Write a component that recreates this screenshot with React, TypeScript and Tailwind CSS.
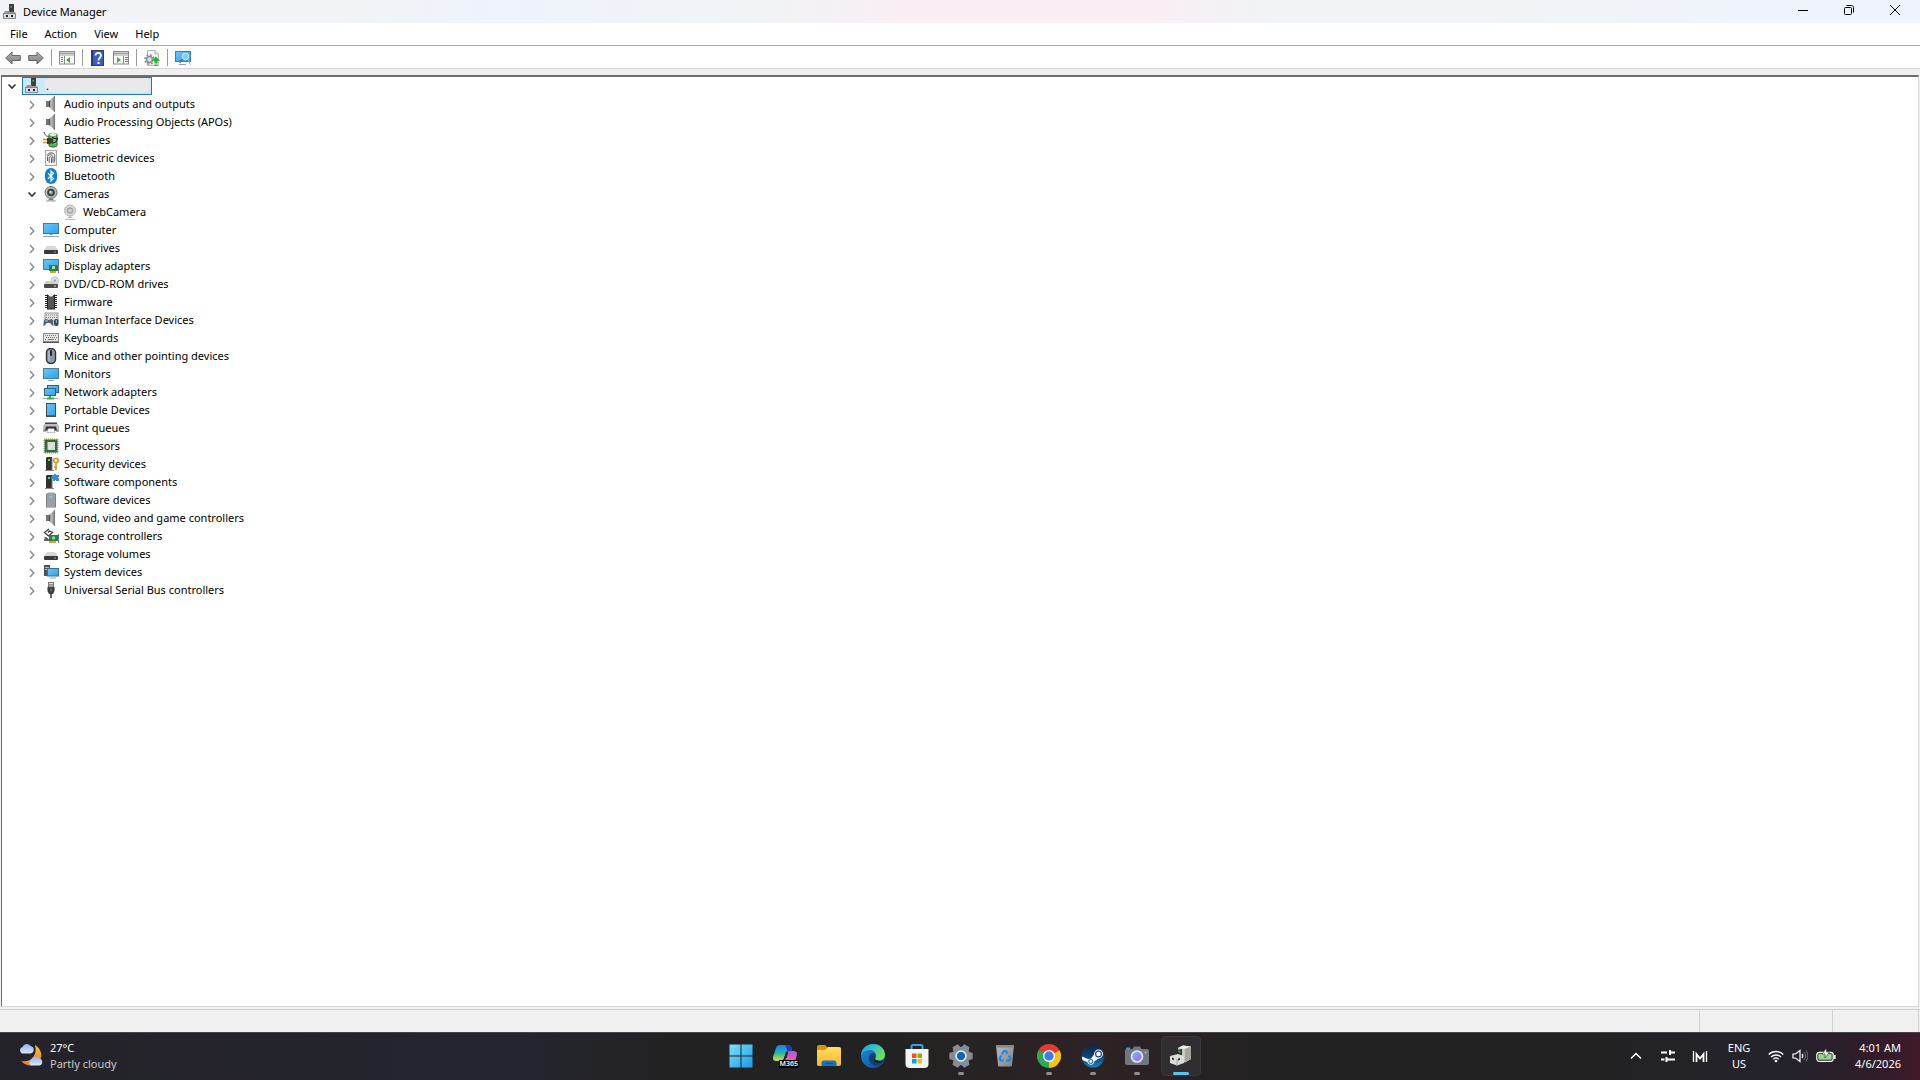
import { useState } from "react";
import type { ReactNode } from "react";

function Svg({ children, size = 16, className = "" }: { children: ReactNode; size?: number; className?: string }) {
  return (
    <svg viewBox={`0 0 ${size} ${size}`} width={size} height={size} className={`block shrink-0 ${className}`} aria-hidden="true">
      {children}
    </svg>
  );
}

function Gradients() {
  return (
    <svg width="0" height="0" className="absolute" aria-hidden="true">
      <defs>
        <linearGradient id="screen" x1="0" y1="0" x2="1" y2="1">
          <stop offset="0" stopColor="#6cc5f8" />
          <stop offset="1" stopColor="#2aa3f2" />
        </linearGradient>
        <linearGradient id="metal" x1="0" y1="0" x2="1" y2="0">
          <stop offset="0" stopColor="#7c7c7c" />
          <stop offset="0.5" stopColor="#b9b9b9" />
          <stop offset="1" stopColor="#8a8a8a" />
        </linearGradient>
        <linearGradient id="arrow" x1="0" y1="0" x2="0" y2="1">
          <stop offset="0" stopColor="#b5b5b5" />
          <stop offset="1" stopColor="#7d7d7d" />
        </linearGradient>
        <linearGradient id="win" gradientUnits="userSpaceOnUse" x1="0" y1="0" x2="24" y2="24">
          <stop offset="0" stopColor="#7fe3fb" />
          <stop offset="1" stopColor="#1797e8" />
        </linearGradient>
        <linearGradient id="copilotA" x1="0" y1="0" x2="0" y2="1">
          <stop offset="0" stopColor="#1c7ff0" />
          <stop offset="0.5" stopColor="#27b5a8" />
          <stop offset="1" stopColor="#d8dc38" />
        </linearGradient>
        <linearGradient id="copilotB" x1="0" y1="0" x2="0" y2="1">
          <stop offset="0" stopColor="#a45bf0" />
          <stop offset="0.5" stopColor="#e45bb0" />
          <stop offset="1" stopColor="#f98a5c" />
        </linearGradient>
        <linearGradient id="folder" x1="0" y1="0" x2="0" y2="1">
          <stop offset="0" stopColor="#ffdc62" />
          <stop offset="1" stopColor="#f6b72c" />
        </linearGradient>
        <linearGradient id="edgeTop" x1="0" y1="0" x2="1" y2="0.6">
          <stop offset="0" stopColor="#1f9de4" />
          <stop offset="0.5" stopColor="#35c1c9" />
          <stop offset="1" stopColor="#6fe04f" />
        </linearGradient>
        <linearGradient id="edgeLow" x1="0" y1="0" x2="1" y2="1">
          <stop offset="0" stopColor="#1b8fdc" />
          <stop offset="1" stopColor="#0c4a94" />
        </linearGradient>
        <linearGradient id="steam" x1="0" y1="0" x2="0" y2="1">
          <stop offset="0" stopColor="#14233f" />
          <stop offset="0.5" stopColor="#123f74" />
          <stop offset="1" stopColor="#1787bd" />
        </linearGradient>
        <linearGradient id="lens" x1="0" y1="0" x2="1" y2="1">
          <stop offset="0" stopColor="#5fc3f4" />
          <stop offset="1" stopColor="#b65fe0" />
        </linearGradient>
        <linearGradient id="moon" x1="0" y1="0" x2="0" y2="1">
          <stop offset="0" stopColor="#f8c23c" />
          <stop offset="1" stopColor="#ef7f2c" />
        </linearGradient>
        <linearGradient id="cloud" x1="0" y1="0" x2="0" y2="1">
          <stop offset="0" stopColor="#8fb2ee" />
          <stop offset="1" stopColor="#dbe6fb" />
        </linearGradient>
        <linearGradient id="bin" x1="0" y1="0" x2="1" y2="1">
          <stop offset="0" stopColor="#b9bcc0" />
          <stop offset="1" stopColor="#7f8489" />
        </linearGradient>
      </defs>
    </svg>
  );
}

const DeviceRoot = () => (
  <Svg>
    <rect x="7" y="0" width="5" height="8" fill="#3c3f3c" />
    <rect x="8.500" y="2" width="1.500" height="1.500" fill="#4fbf4f" />
    <path d="M3 7h4l1 1h5l1 2H1z" fill="#9a9a9a" />
    <rect x="1.500" y="9.500" width="12" height="5" fill="#dcdcdc" stroke="#8a8a8a" />
    <rect x="4" y="11" width="2" height="2" fill="#222" />
    <rect x="9" y="11" width="2" height="2" fill="#222" />
  </Svg>
);
const Speaker = () => (
  <Svg>
    <path d="M3 5h3v6H3z" fill="#747474" />
    <path d="M6 5 11 0.500v15L6 11z" fill="url(#metal)" />
    <path d="M6.500 5v6" stroke="#4f4f4f" />
    <path d="M11.500 0v16" stroke="#7c7c7c" />
  </Svg>
);
const Battery = () => (
  <Svg>
    <path d="M6 2.500C6 1 14 1 14 2.500v11c0 2-8 2-8 0z" fill="#52b556" stroke="#256b2c" />
    <ellipse cx="10" cy="2.500" rx="3.500" ry="1.500" fill="#e2f3df" />
    <path d="M12 5v7" stroke="#a5e694" fill="none" />
    <path d="M1 0c1 4 3 4 5 5" stroke="#444" fill="none" />
    <path d="M9 6c3 0 4 1.500 6 0M9 11c3 0 5-1 5.500-5" stroke="#2b2b2b" strokeWidth="1.300" fill="none" />
    <path d="M4 6h3l3 1v3l-3 2H4z" fill="#3c3c34" />
    <path d="M0 7.500h4M0 10.500h4" stroke="#b79c32" strokeWidth="1.500" />
  </Svg>
);
const Fingerprint = () => (
  <Svg>
    <rect x="2.500" y="0.500" width="11" height="15" fill="#f3f3f3" stroke="#a3a8a5" />
    <g fill="none" stroke="#4a4a4a" strokeWidth="0.900">
      <path d="M4.300 5.500C5 2 11 2 11.700 5.500V10c0 1-.3 2-.7 2.500" />
      <path d="M4.500 11V8c0-4.500 5.500-4.500 5.500 0v4.500" />
      <path d="M6.200 12.500V8.500c0-2.300 2.300-2.300 2.300 0V13" />
    </g>
  </Svg>
);
const Bluetooth = () => (
  <Svg>
    <rect x="2" y="0" width="12" height="16" rx="6" fill="#0a7fe6" />
    <path d="M5 5.200 10.500 10.500 8 13V3l2.500 2.500L5 10.800" fill="none" stroke="#fff" strokeWidth="1.200" />
  </Svg>
);
const Camera = () => (
  <Svg>
    <path d="M4 14.500c2-2 6-2 8 0z" fill="#777" />
    <path d="M3 15h10" stroke="#aaa" />
    <circle cx="8" cy="6.500" r="6" fill="#bdbdbd" stroke="#6f6f6f" />
    <circle cx="8" cy="6.500" r="3.800" fill="#3a3d40" />
    <circle cx="8" cy="6.500" r="2" fill="#8aa0ad" />
    <circle cx="7.300" cy="5.800" r="0.900" fill="#e8f2f6" />
  </Svg>
);
const CameraPale = () => (
  <Svg>
    <path d="M5 14c2-2 4-2 6 0z" fill="#aaa" />
    <path d="M3 15.500h10" stroke="#bbb" />
    <circle cx="8" cy="6.500" r="5.500" fill="#dcdcdc" stroke="#b0b0b0" />
    <circle cx="8" cy="6.500" r="3.300" fill="#a3a5a7" />
    <circle cx="8" cy="6.500" r="1.800" fill="#cfd6da" />
  </Svg>
);
const Computer = () => (
  <Svg>
    <rect x="0.500" y="1.500" width="15" height="10" fill="url(#screen)" stroke="#4b7b96" />
    <path d="M6 12h4v1H6z" fill="#9ab" />
    <path d="M0 14.500h16" stroke="#8fa6b3" />
  </Svg>
);
const Disk = () => (
  <Svg>
    <path d="M4 6h8l3 4H1z" fill="#d8d8d8" />
    <rect x="1" y="10" width="14" height="4" rx="1" fill="#3a3a3a" />
    <rect x="11" y="11.500" width="2" height="1" fill="#59d159" />
  </Svg>
);
const Display = () => (
  <Svg>
    <rect x="0.500" y="1.500" width="15" height="10" fill="url(#screen)" stroke="#4b7b96" />
    <rect x="6" y="7" width="9" height="6" fill="#2e7d46" />
    <rect x="9" y="8" width="3" height="3" fill="#a8d8b0" />
    <path d="M15.500 5v10" stroke="#777" />
    <path d="M7 14h6" stroke="#d9a520" strokeWidth="2" />
  </Svg>
);
const Dvd = () => (
  <Svg>
    <circle cx="12" cy="4.500" r="4" fill="#d9dde0" stroke="#bbb" strokeWidth="0.500" />
    <circle cx="12" cy="4.500" r="1" fill="#8e979d" />
    <path d="M3 5h8l3 3H1z" fill="#cfcfcf" />
    <rect x="1" y="8" width="14" height="4" rx="1" fill="#4a4a4a" />
    <rect x="11" y="9.500" width="2" height="1" fill="#ddd" />
  </Svg>
);
const Firmware = () => (
  <Svg>
    <path d="M4 1h2c0 2 4 2 4 0h2v14H4z" fill="#565656" />
    <path d="M3 1v14M13 1v14" stroke="#222" strokeWidth="2" strokeDasharray="1 1" />
    <path d="M4.500 0.500v14M11.500 0.500v14M4 15h8" stroke="#222" />
  </Svg>
);
const Hid = () => (
  <Svg>
    <rect x="2" y="1" width="13" height="8" fill="#e3e3e3" stroke="#999" />
    <path d="M3 3h11M3 5.500h11" stroke="#777" strokeDasharray="1 1" />
    <path d="M0.500 14C0.500 9 1 7 3 7s1.500 1 2.500 1S7 7 8.500 7s2 3 2 7c-2 0-2.500-3-3.500-3H4c-1 0-1.500 3-3.500 3z" fill="#56616b" />
    <rect x="2.500" y="8" width="2" height="2" fill="#66b7e8" />
    <rect x="11" y="7" width="4.500" height="7" rx="2" fill="#3c434a" />
    <path d="M13.300 8v3" stroke="#9fc8e4" />
  </Svg>
);
const Keyboard = () => (
  <Svg>
    <rect x="0.500" y="3.500" width="15" height="8" fill="#e4e4e4" stroke="#8b8b8b" />
    <path d="M2 5.500h12M3 7.500h11M2 9.500h2M12 9.500h2" stroke="#777" strokeDasharray="1 1" />
    <path d="M5 9.500h6" stroke="#777" />
    <path d="M0 12.500h16" stroke="#555" />
  </Svg>
);
const Mouse = () => (
  <Svg>
    <rect x="3.500" y="0.500" width="9" height="15" rx="4" fill="#8e99a8" stroke="#2f343c" strokeWidth="1.400" />
    <path d="M6 3v10" stroke="#c5ccd6" />
    <rect x="7" y="2" width="2" height="6" rx="1" fill="#23272e" />
  </Svg>
);
const Monitor = () => (
  <Svg>
    <rect x="0.500" y="2.500" width="15" height="10" fill="url(#screen)" stroke="#4b7b96" />
    <path d="M5 14.500h6" stroke="#8fa6b3" />
  </Svg>
);
const Network = () => (
  <Svg>
    <rect x="4.500" y="1.500" width="11" height="7" fill="url(#screen)" stroke="#31627e" />
    <rect x="1.500" y="4.500" width="11" height="7" fill="url(#screen)" stroke="#31627e" />
    <path d="M0 14.500h15" stroke="#a3b3a3" />
    <path d="M7 12v2M4 14.500h7" stroke="#35b03a" strokeWidth="2" />
  </Svg>
);
const Portable = () => (
  <Svg>
    <rect x="3.500" y="1.500" width="9" height="13" fill="url(#screen)" stroke="#444c55" />
    <path d="M4 13.500h8" stroke="#586069" />
  </Svg>
);
const Printer = () => (
  <Svg>
    <path d="M2 2.500h12v2H2z" fill="#444" />
    <path d="M1 4h14l1 2v5H0V6z" fill="#b9bec1" />
    <path d="M3 6.500h10l1 4H2z" fill="#303336" />
    <path d="M5 8.500h6l1 4H4z" fill="#f4f4f4" stroke="#888" strokeWidth="0.500" />
    <path d="M0 11h3M13 11h3" stroke="#666" />
  </Svg>
);
const Processor = () => (
  <Svg>
    <rect x="1" y="1" width="14" height="14" fill="none" stroke="#c6b46a" strokeWidth="1.500" strokeDasharray="1 1" />
    <rect x="1.500" y="1.500" width="13" height="13" fill="#2f6a45" />
    <rect x="4.500" y="4" width="7.500" height="8" fill="#d8dcd8" />
    <path d="M6 10l4-4" stroke="#f6f6f6" />
  </Svg>
);
const Tower = () => (
  <>
    <path d="M3 2l1-1h5v13H3z" fill="#303330" />
    <path d="M9 2v12" stroke="#777" />
    <rect x="5" y="3" width="2" height="2" fill="#45dd4f" />
    <path d="M2 14.500h9" stroke="#888" />
  </>
);
const Security = () => (
  <Svg>
    <Tower />
    <circle cx="13" cy="4.500" r="2.200" fill="none" stroke="#d69a2a" strokeWidth="1.700" />
    <path d="M13 7v7M13 11h-2" stroke="#d69a2a" strokeWidth="1.700" />
  </Svg>
);
const Component = () => (
  <Svg>
    <Tower />
    <path d="M9 1h2V0h2v1h3v2h-1v1h1v3h-3V6h-1v1h-2V5H8V3h1z" fill="#3b8ed0" />
  </Svg>
);
const SoftDevice = () => (
  <Svg>
    <path d="M3 2l2-1.500h6L13 2v13H3z" fill="#9ba1a6" />
    <path d="M3.500 2v13M12.500 2v13" stroke="#7b8287" />
    <rect x="7" y="4" width="2" height="2" fill="#5be0d8" />
    <path d="M3 15.500h10" stroke="#bbb" />
  </Svg>
);
const StorageCtl = () => (
  <Svg>
    <path d="M6 1 1.500 4.500 5.500 8l4-3.500L6.500 3 5 4.500" fill="none" stroke="#3b3b3b" strokeWidth="1.300" />
    <path d="M1.500 9.500 5 11" stroke="#555" strokeWidth="1.500" />
    <rect x="6" y="7" width="9" height="6" fill="#2e7d46" />
    <rect x="9" y="8.500" width="3" height="3" fill="#8ad098" />
    <path d="M1 12h5" stroke="#333" strokeWidth="1.500" />
    <path d="M15.500 6v9" stroke="#777" />
    <path d="M6 14h7" stroke="#e0a81f" strokeWidth="2" />
  </Svg>
);
const System = () => (
  <Svg>
    <path d="M1 1h6v11H1z" fill="#4b545b" />
    <path d="M2 3.500h4M2 5.500h4" stroke="#a9b5bd" />
    <rect x="4.500" y="4.500" width="11" height="7.500" fill="url(#screen)" stroke="#3d6f8d" />
    <path d="M7 14h6" stroke="#8fa6b3" />
  </Svg>
);
const Usb = () => (
  <Svg>
    <rect x="5.500" y="0.500" width="5" height="4.500" fill="#e0e0e0" stroke="#777" />
    <path d="M7 2v2M9 2v2" stroke="#555" />
    <path d="M4.500 5h7v4L10 12H6l-1.500-3z" fill="#3c3c3c" />
    <path d="M8 12v4" stroke="#666" strokeWidth="2" />
    <path d="M8 6.500v3" stroke="#999" />
  </Svg>
);

const devices: { label: string; icon: ReactNode; children?: { label: string; icon: ReactNode }[] }[] = [
  { label: "Audio inputs and outputs", icon: <Speaker /> },
  { label: "Audio Processing Objects (APOs)", icon: <Speaker /> },
  { label: "Batteries", icon: <Battery /> },
  { label: "Biometric devices", icon: <Fingerprint /> },
  { label: "Bluetooth", icon: <Bluetooth /> },
  { label: "Cameras", icon: <Camera />, children: [{ label: "WebCamera", icon: <CameraPale /> }] },
  { label: "Computer", icon: <Computer /> },
  { label: "Disk drives", icon: <Disk /> },
  { label: "Display adapters", icon: <Display /> },
  { label: "DVD/CD-ROM drives", icon: <Dvd /> },
  { label: "Firmware", icon: <Firmware /> },
  { label: "Human Interface Devices", icon: <Hid /> },
  { label: "Keyboards", icon: <Keyboard /> },
  { label: "Mice and other pointing devices", icon: <Mouse /> },
  { label: "Monitors", icon: <Monitor /> },
  { label: "Network adapters", icon: <Network /> },
  { label: "Portable Devices", icon: <Portable /> },
  { label: "Print queues", icon: <Printer /> },
  { label: "Processors", icon: <Processor /> },
  { label: "Security devices", icon: <Security /> },
  { label: "Software components", icon: <Component /> },
  { label: "Software devices", icon: <SoftDevice /> },
  { label: "Sound, video and game controllers", icon: <Speaker /> },
  { label: "Storage controllers", icon: <StorageCtl /> },
  { label: "Storage volumes", icon: <Disk /> },
  { label: "System devices", icon: <System /> },
  { label: "Universal Serial Bus controllers", icon: <Usb /> },
];

function Expander({ open, label, onClick }: { open: boolean; label: string; onClick: () => void }) {
  return (
    <button type="button" aria-label={label} aria-expanded={open} onClick={onClick} className="flex w-5 shrink-0 items-center justify-center">
      <svg viewBox="0 0 10 10" width="10" height="10" fill="none" aria-hidden="true">
        {open ? (
          <path d="M1.500 3.500 5 7l3.500-3.500" stroke="#333" strokeWidth="1.600" />
        ) : (
          <path d="M3 2l3.800 4L3 10" stroke="#8a8a8a" strokeWidth="1.400" />
        )}
      </svg>
    </button>
  );
}

function TreeItem({ label, icon, children }: (typeof devices)[number]) {
  const [open, setOpen] = useState(Boolean(children));
  return (
    <li>
      <div className="flex h-[18px] items-center pl-5">
        <Expander open={open && Boolean(children)} label={`Toggle ${label}`} onClick={() => setOpen(!open)} />
        <button type="button" className="ml-px flex items-center gap-1 whitespace-nowrap">
          {icon}
          <span className="pl-px">{label}</span>
        </button>
      </div>
      {open && children && (
        <ul>
          {children.map((c) => (
            <li key={c.label} className="flex h-[18px] items-center pl-[60px]">
              <button type="button" className="flex items-center gap-1 whitespace-nowrap">
                {c.icon}
                <span className="pl-px">{c.label}</span>
              </button>
            </li>
          ))}
        </ul>
      )}
    </li>
  );
}

const PaneWindow = ({ flip = false }: { flip?: boolean }) => (
  <Svg>
    <rect x="0.500" y="1.500" width="15" height="12.500" fill="#fafafa" stroke="#858b91" />
    <path d="M1 3.500h14" stroke="#9aa2a9" strokeWidth="2" />
    <path d="M1 5.500h14" stroke="#c9ced2" />
    <path d={flip ? "M10.500 6v8" : "M5.500 6v8"} stroke="#858b91" />
    <path d={flip ? "M12 7.500h3M12 9.500h3M12 11.500h3" : "M2 7.500h2M2 9.500h2M2 11.500h2"} stroke="#4a7fb0" />
    <path d={flip ? "M4 7v6l4-3z" : "M11 7v6L7 10z"} fill="#3fae3c" />
  </Svg>
);

function Tool({ label, children }: { label: string; children: ReactNode }) {
  return (
    <button type="button" aria-label={label} title={label} className="flex w-[23px] items-center justify-center">
      {children}
    </button>
  );
}
const Separator = () => (
  <div className="flex w-2 justify-center py-0.5">
    <div className="w-px bg-[#9b9b9b]" />
  </div>
);

function Toolbar() {
  return (
    <div role="toolbar" className="flex h-[22px] shrink-0 bg-white pt-px pl-px">
      <Tool label="Back">
        <Svg>
          <path d="M0.700 8 7 2v3.500h8.300v5H7V14z" fill="url(#arrow)" stroke="#666" />
        </Svg>
      </Tool>
      <Tool label="Forward">
        <Svg>
          <path d="M15.300 8 9 2v3.500H0.700v5H9V14z" fill="url(#arrow)" stroke="#666" />
        </Svg>
      </Tool>
      <Separator />
      <Tool label="Show console tree">
        <PaneWindow />
      </Tool>
      <Separator />
      <Tool label="Help">
        <Svg>
          <rect x="1.500" y="0.500" width="12" height="15" fill="#3a5fc4" stroke="#263c86" />
          <path d="M2.500 1v14" stroke="#22357a" />
          <path d="M5.500 5.500c0-3.500 5.500-3.500 5.500 0C11 7.500 8.500 8 8.500 10.500" fill="none" stroke="#fff" strokeWidth="1.800" />
          <rect x="7.500" y="12" width="2" height="2" fill="#fff" />
        </Svg>
      </Tool>
      <Tool label="Show action pane">
        <PaneWindow flip />
      </Tool>
      <Separator />
      <Tool label="Update drivers">
        <Svg>
          <path d="M3.500 0.500H11L14.500 4v11.500h-11z" fill="#f7f7f7" stroke="#b5b5b5" />
          <path d="M11 0.500V4h3.500" fill="none" stroke="#b5b5b5" />
          <circle cx="5.500" cy="9.500" r="4.600" fill="none" stroke="#8b8b8b" strokeWidth="1.600" strokeDasharray="1.800 1.812" />
          <circle cx="5.500" cy="9.500" r="3" fill="#e2e2e2" stroke="#8b8b8b" strokeWidth="1.600" />
          <path d="M12 6.500 16 11h-2.500v2h-3v-2H8z" fill="#25b32b" />
          <path d="M10.500 14h3M10.500 15.500h3" stroke="#25b32b" />
        </Svg>
      </Tool>
      <Separator />
      <Tool label="Scan for hardware changes">
        <Svg>
          <rect x="0.500" y="1.500" width="15" height="10" fill="url(#screen)" stroke="#3b7fae" />
          <path d="M4 14.500h7" stroke="#8fa6b3" />
          <path d="M8 9 4.500 12.500" stroke="#5b6f80" strokeWidth="1.800" />
          <circle cx="10.500" cy="6.500" r="3.300" fill="#84cdf8" stroke="#d5edfb" />
          <path d="M13 9.500l2.500 5" stroke="#9fb4c2" />
        </Svg>
      </Tool>
    </div>
  );
}

const StartIcon = () => (
  <Svg size={24}>
    <path d="M0.500 0.500h11v11h-11zM12.500 0.500h11v11h-11zM0.500 12.500h11v11h-11zM12.500 12.500h11v11h-11z" fill="url(#win)" />
  </Svg>
);
const CopilotIcon = () => (
  <span className="relative block">
    <Svg size={24}>
      <path d="M7 1h8c2 0 3 1 3.500 3l.7 3H15c-1.500 0-2 1-2.500 3l-1.600 4c-.6 2-1.500 3-3.500 3H3c-3 0-3.500-2-2.700-5L3 4c.7-2 2-3 4-3z" fill="url(#copilotA)" />
      <path d="M12 1h3c2 0 3 1 3.500 3l.7 3h-4.500z" fill="#2438b8" />
      <path d="M16 7h4.500c3 0 4 2 3.200 5l-2 6c-.7 2-2 3-4 3H9c2 0 2.500-2 3-4l2.500-8c.4-1.500.5-2 1.500-2z" fill="url(#copilotB)" />
      <path d="M13 8.500h2L13.500 14h-2z" fill="#222" />
    </Svg>
    <span className="absolute top-4 left-1.5 bg-black px-px font-['Noto_Sans'] text-[7px] leading-2 font-semibold text-white">M365</span>
  </span>
);
const FolderIcon = () => (
  <Svg size={24}>
    <path d="M0 3c0-1 .5-2 2-2h6l3 3h-1L8 7H0z" fill="#d9930f" />
    <path d="M0 6h8l3-3h11c1.500 0 2 .7 2 2v15c0 1-.7 2-2 2H2c-1.500 0-2-1-2-2z" fill="url(#folder)" />
    <path d="M4.500 22v-3c0-1.500 1-2.500 2.500-2.500h10c1.500 0 2.500 1 2.500 2.500v3z" fill="#1274c5" />
    <path d="M8 19.500h8" stroke="#0b5290" strokeWidth="1.200" />
  </Svg>
);
const EdgeIcon = () => (
  <Svg size={24}>
    <circle cx="12" cy="12" r="12" fill="url(#edgeLow)" />
    <path d="M0 12C0 5 5.500 0 12 0c7 0 12 5 12 10.500 0 4-3 6-6 6-2.500 0-4-1-4-2 0-.6 1-1 1-3C15 8.500 12.500 6 9 6c-5 0-9 3-9 6z" fill="url(#edgeTop)" />
    <path d="M8 14c0-3 2-5 4.500-5C14 9.500 15 10.500 15 11.700c0 1.600-1 2-1 2.800 0 1.500 2 2.500 4.500 2.500 1.500 0 3-.5 4-1.300C20 21 17 22 15 22c-4 0-7-4-7-8z" fill="#133f72" />
    <path d="M14 14.500c0 1.500 2 2.500 4.500 2.500 1.500 0 3-.5 4-1.300-1 2-2.500 3-4 3.300-4 .5-6.500-2-5.500-5z" fill="#222" />
  </Svg>
);
const StoreIcon = () => (
  <Svg size={24}>
    <path d="M6.500 6V2.500c0-1 .5-1.500 1.500-1.500h8c1 0 1.500.5 1.500 1.500V6" fill="none" stroke="#2fa4de" strokeWidth="2" />
    <path d="M0.500 5h23v15c0 2.500-1.500 4-4 4h-15c-2.500 0-4-1.500-4-4z" fill="#f4f4f4" />
    <rect x="7" y="9.500" width="4.500" height="4.500" fill="#f25022" />
    <rect x="12.500" y="9.500" width="4.500" height="4.500" fill="#7fba00" />
    <rect x="7" y="15" width="4.500" height="4.500" fill="#00a4ef" />
    <rect x="12.500" y="15" width="4.500" height="4.500" fill="#ffb900" />
  </Svg>
);
const GearIcon = () => (
  <Svg size={24}>
    <circle cx="12" cy="12" r="9" fill="#858d96" />
    <g fill="#858d96">
      {[30, 90, 150, 210, 270, 330].map((a) => (
        <path key={a} d="M7.500 5 9 0.300h6L16.500 5z" transform={`rotate(${a} 12 12)`} />
      ))}
    </g>
    <circle cx="12" cy="12" r="5.700" fill="#eef2f6" />
    <circle cx="12" cy="12" r="4.200" fill="#1464b4" />
  </Svg>
);
const BinIcon = () => (
  <Svg size={24}>
    <path d="M3 1h18l-2 20c-.1 1-.6 1.500-1.600 1.500H6.600c-1 0-1.500-.5-1.600-1.500z" fill="url(#bin)" />
    <path d="M3 1h18l-.3 2.500H3.300z" fill="#83888d" />
    <g fill="none" stroke="#1b8be0" strokeWidth="2.200">
      <path d="M9 10.500 11 7h2l1.700 3" />
      <path d="M16 11.500l1.300 3-1 2H13" />
      <path d="M10.500 16.500H7.700l-1-2 1.500-3" />
    </g>
  </Svg>
);
const ChromeIcon = () => (
  <Svg size={24}>
    <path d="M12 12 1.600 6A12 12 0 0 1 22.400 6z" fill="#e33b2e" />
    <path d="M12 12 22.400 6A12 12 0 0 1 12 24z" fill="#fbc116" />
    <path d="M12 12V24A12 12 0 0 1 1.600 6z" fill="#2da94f" />
    <path d="M12 6h10.400L12 12z" fill="#e33b2e" />
    <path d="M17.200 15 12 24v-9z" fill="#fbc116" />
    <path d="M1.600 6l5.200 9L12 12z" fill="#2da94f" />
    <circle cx="12" cy="12" r="6" fill="#fff" />
    <circle cx="12" cy="12" r="4.700" fill="#3b7ded" />
  </Svg>
);
const SteamIcon = () => (
  <Svg size={24}>
    <circle cx="12" cy="12" r="11.500" fill="url(#steam)" />
    <path d="M0.800 12.500 7.500 15.300c1-.6 1.500-.6 2.500-.6l3-4.200C13 7.500 15 5.500 17.500 5.500S22 7.500 22 10s-2 4.500-4.500 4.500l-4.200 3c-.2 2-1.600 3.300-3.500 3.300-1.700 0-3-1.100-3.400-2.700L1.500 16z" fill="#f2f6fa" />
    <circle cx="17.500" cy="10" r="2.900" fill="#f2f6fa" stroke="#174a7c" strokeWidth="1.200" />
    <circle cx="9.800" cy="17.500" r="2" fill="none" stroke="#174a7c" />
  </Svg>
);
const CameraAppIcon = () => (
  <Svg size={24}>
    <path d="M1 5c0-1 .5-1.500 1.500-1.500H5V7H1z" fill="#3da2dc" />
    <path d="M7.500 5 9 2.500h6L16.500 5H22c1.300 0 2 .7 2 2v12c0 1.300-.7 2-2 2H2c-1.300 0-2-.7-2-2V7c0-1.300.7-2 2-2z" fill="#70777e" />
    <circle cx="12" cy="12.500" r="6.300" fill="#e6eaf0" />
    <circle cx="12" cy="12.500" r="4.700" fill="url(#lens)" />
    <circle cx="20.500" cy="8.500" r="1" fill="#b5bac0" />
  </Svg>
);
const DeviceAppIcon = () => (
  <Svg size={24}>
    <path d="M9 4l5-2.500 8 1V15l-6 3.500L9 16z" fill="#c9c9c6" />
    <path d="M9 4l7 1 6-2.500-8-1z" fill="#ecece9" />
    <path d="M16 5v13.500l6-3.500V2.500z" fill="#a5a5a2" />
    <path d="M8 6l5-1v7l-5 1z" fill="#25352a" />
    <path d="M9 7.500l2-.5v2" stroke="#5d9a68" fill="none" />
    <path d="M1 12l8-2 6 2v7l-7 2.500L1 19z" fill="#dcdcd9" />
    <path d="M3 13.500l2 .7v2l-2-.7zM9 14.500l2-.6v2l-2 .6z" fill="#333" />
    <path d="M8 15v6.500" stroke="#a5a5a2" />
  </Svg>
);

const apps: { label: string; icon: ReactNode; state?: "running" | "active" }[] = [
  { label: "Start", icon: <StartIcon /> },
  { label: "Microsoft 365 Copilot", icon: <CopilotIcon /> },
  { label: "File Explorer", icon: <FolderIcon /> },
  { label: "Microsoft Edge", icon: <EdgeIcon /> },
  { label: "Microsoft Store", icon: <StoreIcon /> },
  { label: "Settings", icon: <GearIcon />, state: "running" },
  { label: "Recycle Bin", icon: <BinIcon /> },
  { label: "Google Chrome", icon: <ChromeIcon />, state: "running" },
  { label: "Steam", icon: <SteamIcon />, state: "running" },
  { label: "Camera", icon: <CameraAppIcon />, state: "running" },
  { label: "Device Manager", icon: <DeviceAppIcon />, state: "active" },
];

function Taskbar() {
  return (
    <footer className="grid h-12 shrink-0 grid-cols-[1fr_auto_1fr] border-t border-[#45444a] bg-[linear-gradient(90deg,#242329_0%,#252530_27%,#222222_35%,#232222_47%,#2e2225_57%,#222222_66%,#222222_82%,#24232c_93%,#2d1d28_97%,#401a2b_100%)] pb-0.5 text-white">
      <div className="flex items-center pl-[18px]">
        <button type="button" className="flex items-center gap-[7px] text-left">
          <Svg size={25}>
            <path d="M17 2c6 4 8 10 5 15-3 6-12 8-19 1 9 2 17-5 14-16z" fill="url(#moon)" />
            <path d="M4 10.500a3.500 3.500 0 0 1 .5-6.500 4.500 4.500 0 0 1 8-1 3.800 3.800 0 0 1 0 7.500z" fill="url(#cloud)" />
            <path d="M13 22.500a3.300 3.300 0 0 1 .5-6 4.500 4.500 0 0 1 8-1 3.600 3.600 0 0 1 0 7z" fill="url(#cloud)" />
          </Svg>
          <span className="flex flex-col leading-4">
            <span>27°C</span>
            <span className="text-[#c9c8cc]">Partly cloudy</span>
          </span>
        </button>
      </div>
      <nav className="flex items-center pl-px" aria-label="Taskbar">
        {apps.map((app) => (
          <div key={app.label} className="px-0.5">
            <button
              type="button"
              aria-label={app.label}
              className={
                app.state === "active"
                  ? "relative flex size-10 items-center justify-center rounded-[4px] border border-[#3a3839] bg-[#302e30]"
                  : "relative flex size-10 items-center justify-center"
              }
            >
              {app.icon}
              {app.state === "running" && <span className="absolute bottom-px h-[3px] w-1.5 rounded-full bg-[#908d90]" />}
              {app.state === "active" && <span className="absolute bottom-0 h-[3px] w-4 rounded-full bg-[#5cc2f0]" />}
            </button>
          </div>
        ))}
      </nav>
      <div className="flex items-center justify-end pr-[19px]">
        <button type="button" aria-label="Show hidden icons" className="flex w-8 justify-center">
          <Svg>
            <path d="M3 10.500 8 5.500l5 5" fill="none" stroke="#fff" strokeWidth="1.500" />
          </Svg>
        </button>
        <button type="button" aria-label="Audio settings" className="flex w-8 justify-center">
          <Svg>
            <path d="M1 4.500h6M9 4.500h6M1 11.500h3.500M6.500 11.500H15" stroke="#fff" strokeWidth="2" />
            <path d="M10 2v5M6.500 9v5" stroke="#fff" strokeWidth="2" />
          </Svg>
        </button>
        <button type="button" aria-label="Mod manager" className="flex w-8 justify-center">
          <Svg>
            <path d="M1.500 3v11M14.500 3v11" stroke="#fff" strokeWidth="1.300" />
            <path d="M4.500 14V6l3.500 4.500L11.500 6v8" fill="none" stroke="#fff" strokeWidth="1.800" />
          </Svg>
        </button>
        <button type="button" aria-label="Input language" className="flex w-[46px] flex-col items-center leading-4">
          <span>ENG</span>
          <span>US</span>
        </button>
        <button type="button" aria-label="Network, volume and battery" className="mr-[19px] ml-1.5 flex items-center gap-2">
          <Svg>
            <g fill="none" stroke="#fff" strokeWidth="1.300">
              <path d="M0.700 6.500c4-4 10.600-4 14.600 0" />
              <path d="M3 9c2.800-2.700 7.200-2.700 10 0" />
              <path d="M5.300 11.200c1.500-1.400 3.900-1.400 5.400 0" />
            </g>
            <circle cx="8" cy="13" r="1.300" fill="#fff" />
          </Svg>
          <Svg>
            <path d="M1 6h2.500L8 2.500v11L3.500 10H1z" fill="none" stroke="#fff" strokeWidth="1.200" />
            <path d="M10 6c1 1.200 1 2.800 0 4" fill="none" stroke="#fff" strokeWidth="1.200" />
            <path d="M12 4c2 2.400 2 5.600 0 8M14 2.500c2.400 3.400 2.400 7.600 0 11" fill="none" stroke="#77757b" />
          </Svg>
          <svg viewBox="0 0 20 16" width="20" height="16" aria-hidden="true">
            <rect x="0.800" y="4.300" width="16.400" height="9" rx="2.500" fill="#222" stroke="#fff" strokeWidth="1.200" />
            <rect x="2.300" y="5.800" width="13.400" height="6" rx="1" fill="#94d68f" />
            <path d="M18.800 7v4" stroke="#fff" strokeWidth="1.500" />
            <path d="M10.500 0 6 6h3v4l4.500-6h-3z" fill="#fff" stroke="#222" strokeWidth="0.600" />
          </svg>
        </button>
        <button type="button" aria-label="Clock" className="flex flex-col items-end leading-4">
          <span>4:01 AM</span>
          <span>4/6/2026</span>
        </button>
      </div>
    </footer>
  );
}

export default function App() {
  const [rootOpen, setRootOpen] = useState(true);
  return (
    <div className="flex h-screen flex-col overflow-hidden bg-[#f0f0f0] font-['Noto_Sans','Open_Sans',sans-serif] text-[11px] text-black">
      <Gradients />
      <header className="flex h-[23px] shrink-0 items-center justify-between bg-[linear-gradient(90deg,#f1f3f6_0%,#f1f3f6_18%,#eef3fc_26%,#f1f3f6_40%,#fbedf4_49%,#fbedf4_58%,#f1f3f6_66%,#f1f3f6_78%,#eff3fb_90%)]">
        <h1 className="flex items-center gap-1 pt-px pl-0.5">
          <DeviceRoot />
          <span className="pl-px">Device Manager</span>
        </h1>
        <div className="flex h-full items-start">
          <button type="button" aria-label="Minimize" className="flex h-5 w-[46px] items-center justify-center">
            <Svg size={10}>
              <path d="M0 5.500h10" stroke="#000" />
            </Svg>
          </button>
          <button type="button" aria-label="Restore" className="flex h-5 w-[46px] items-center justify-center">
            <Svg size={10}>
              <rect x="0.500" y="2.500" width="7" height="7" rx="1" fill="none" stroke="#000" />
              <path d="M2.500 0.500H7.500c1.300 0 2 .7 2 2v5" fill="none" stroke="#000" />
            </Svg>
          </button>
          <button type="button" aria-label="Close" className="mr-0.5 flex h-5 w-[46px] items-center justify-center">
            <Svg size={10}>
              <path d="M0 0l10 10M10 0 0 10" stroke="#000" />
            </Svg>
          </button>
        </div>
      </header>

      <nav className="flex h-[23px] shrink-0 items-center gap-px border-b border-[#a8a8a8] bg-white pl-0.5" aria-label="Menu bar">
        {["File", "Action", "View", "Help"].map((m) => (
          <button key={m} type="button" className="px-2">
            {m}
          </button>
        ))}
      </nav>

      <Toolbar />
      <div className="h-[7px] shrink-0 border-t border-[#d4d4d4]" />

      <main className="min-h-0 flex-1 px-px pb-0.5">
        <div className="h-full overflow-hidden border-t-2 border-r border-b border-l border-t-[#6e6e6e] border-r-[#d8d8d8] border-b-[#d8d8d8] border-l-[#6e6e6e] bg-white">
          <ul>
            <li>
              <div className="flex h-[18px] items-center">
                <Expander open={rootOpen} label="Toggle computer" onClick={() => setRootOpen(!rootOpen)} />
                <button type="button" className="flex h-[18px] w-[130px] items-center gap-1 border border-[#1b78c4] bg-[#cce8ff] pl-px">
                  <DeviceRoot />
                  <span className="flex h-3.5 flex-1 items-end self-start rounded-[7px] bg-[#e9e9e9] pl-0.5 leading-3">.</span>
                </button>
              </div>
              {rootOpen && (
                <ul>
                  {devices.map((d) => (
                    <TreeItem key={d.label} {...d} />
                  ))}
                </ul>
              )}
            </li>
          </ul>
        </div>
      </main>

      <div role="status" className="flex h-[23px] shrink-0 border-t border-[#cfcfcf]">
        <div className="flex-1 border-r border-[#d2d2d2]" />
        <div className="w-[133px] border-r border-[#d2d2d2]" />
        <div className="mr-px w-[86px] border-r border-[#d2d2d2]" />
      </div>

      <Taskbar />
    </div>
  );
}
